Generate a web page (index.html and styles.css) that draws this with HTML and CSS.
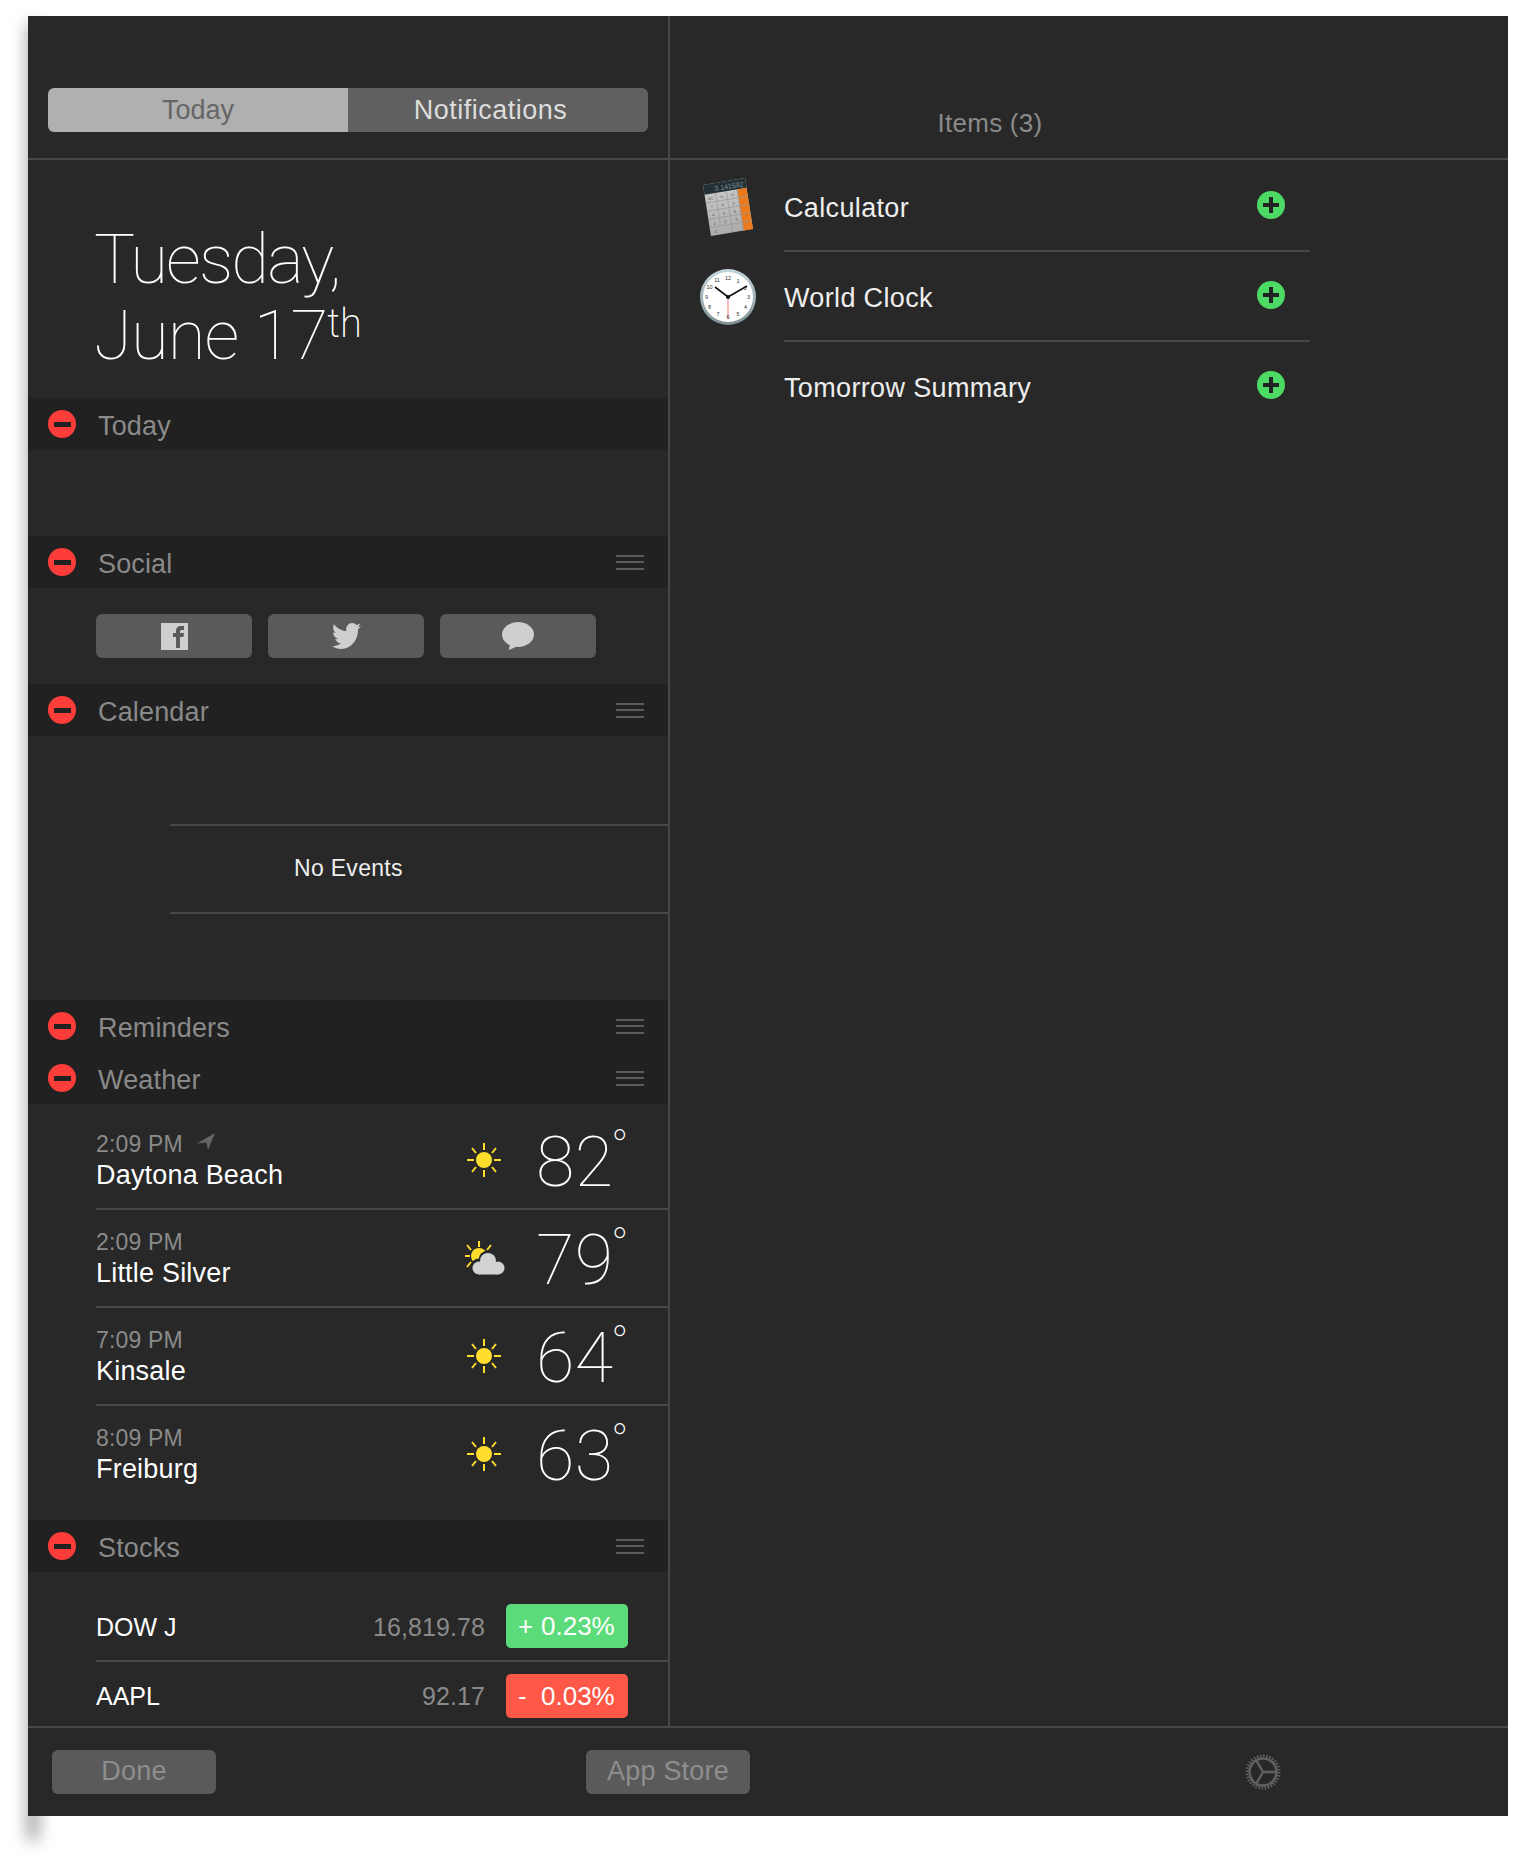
FILE: index.html
```html
<!DOCTYPE html>
<html lang="en">
	<head>
		<meta charset="UTF-8">
		<title>Notification Center - Edit</title>
		<link rel="stylesheet" href="styles.css">
	</head>
	<body>
		<svg class="defs" width="0" height="0">
			<symbol id="sun" viewBox="0 0 36 36">
				<circle cx="18" cy="18" r="8" fill="#fedd2d"/>
				<g stroke="#fedd2d" stroke-width="2">
					<path d="M18 1v7M18 28v7M1 18h7M28 18h7M6 6l4 5M30 6l-4 5M6 30l4-5M30 30l-4-5"/>
				</g>
			</symbol>
		</svg>
		<div class="window">
			<div class="top">
				<div class="topleft">
					<div class="segment">
						<div class="seg on">Today</div>
						<div class="seg off">Notifications</div>
					</div>
				</div>
				<div class="topright">Items (3)</div>
			</div>
			<div class="middle">
				<div class="left">
					<div class="date">
						<div class="tuesday">Tuesday,</div>
						<div class="june">June 17<sup>th</sup></div>
					</div>

					<div class="head"><span class="remove"></span><span class="label">Today</span></div>
					<div class="todaybody"></div>

					<div class="head"><span class="remove"></span><span class="label">Social</span><span class="handle"></span></div>
					<div class="social">
						<div class="socialbtn">
							<svg width="27" height="27" viewBox="0 0 27 27">
								<rect width="27" height="27" fill="#cfcfcf"/>
								<path d="M15 25V14h-3v-4h3V8c0-3 2-5 5-5h3v4h-2c-1.500 0-2 .5-2 2v1h4l-.5 4H19v11z" fill="#5a5a5a"/>
							</svg>
						</div>
						<div class="socialbtn">
							<svg width="29" height="26" viewBox="0 48 512 416" preserveAspectRatio="none">
								<path d="M459.37 151.716c.325 4.548.325 9.097.325 13.645 0 138.72-105.583 298.558-298.558 298.558-59.452 0-114.68-17.219-161.137-47.106 8.447.974 16.568 1.299 25.34 1.299 49.055 0 94.213-16.568 130.274-44.832-46.132-.975-84.792-31.188-98.112-72.772 6.498.974 12.995 1.624 19.818 1.624 9.421 0 18.843-1.3 27.614-3.573-48.081-9.747-84.143-51.98-84.143-102.985v-1.299c13.969 7.797 30.214 12.67 47.431 13.319-28.264-18.843-46.781-51.005-46.781-87.391 0-19.492 5.197-37.36 14.294-52.954 51.655 63.675 129.3 105.258 216.365 109.807-1.624-7.797-2.599-15.918-2.599-24.04 0-57.828 46.782-104.934 104.934-104.934 30.213 0 57.502 12.67 76.67 33.137 23.715-4.548 46.456-13.32 66.599-25.34-7.798 24.366-24.366 44.833-46.132 57.827 21.117-2.273 41.584-8.122 60.426-16.243-14.292 20.791-32.161 39.308-52.628 54.253z" fill="#cfcfcf"/>
							</svg>
						</div>
						<div class="socialbtn">
							<svg width="32" height="28" viewBox="0 0 32 28">
								<ellipse cx="16" cy="12.500" rx="16" ry="12.500" fill="#cfcfcf"/>
								<path d="M8 21l-1 7 9-4z" fill="#cfcfcf"/>
							</svg>
						</div>
					</div>

					<div class="head"><span class="remove"></span><span class="label">Calendar</span><span class="handle"></span></div>
					<div class="calendar">
						<div class="noevents">No Events</div>
					</div>

					<div class="head"><span class="remove"></span><span class="label">Reminders</span><span class="handle"></span></div>
					<div class="head"><span class="remove"></span><span class="label">Weather</span><span class="handle"></span></div>
					<div class="weather">
						<div class="city">
							<div class="where">
								<div class="time">2:09 PM
									<svg class="arrow" width="18" height="17" viewBox="0 0 18 17"><path d="M18 0L0 10.500l9.500-1L11 17z" fill="#666"/></svg>
								</div>
								<div class="name">Daytona Beach</div>
							</div>
							<svg class="sky" width="36" height="36"><use href="#sun"/></svg>
							<div class="temp">82<span class="deg">°</span></div>
						</div>
						<div class="city">
							<div class="where">
								<div class="time">2:09 PM</div>
								<div class="name">Little Silver</div>
							</div>
							<svg class="sky partly" width="44" height="36" viewBox="0 0 44 36">
								<circle cx="17" cy="16" r="8" fill="#fedd2d"/>
								<path d="M17 1v6M3 16h5M5 5l4 5M29 5l-4 5M5 27l4-5" stroke="#fedd2d" stroke-width="2"/>
								<g fill="#282828">
									<circle cx="17" cy="27" r="8.500"/>
									<circle cx="26" cy="20" r="9.500"/>
								</g>
								<g fill="#d2d2d2">
									<circle cx="17" cy="28" r="6.500"/>
									<circle cx="26" cy="21" r="8"/>
									<circle cx="36" cy="28" r="6.500"/>
									<rect x="17" y="24" width="19" height="10.500"/>
								</g>
							</svg>
							<div class="temp">79<span class="deg">°</span></div>
						</div>
						<div class="city">
							<div class="where">
								<div class="time">7:09 PM</div>
								<div class="name">Kinsale</div>
							</div>
							<svg class="sky" width="36" height="36"><use href="#sun"/></svg>
							<div class="temp">64<span class="deg">°</span></div>
						</div>
						<div class="city last">
							<div class="where">
								<div class="time">8:09 PM</div>
								<div class="name">Freiburg</div>
							</div>
							<svg class="sky" width="36" height="36"><use href="#sun"/></svg>
							<div class="temp">63<span class="deg">°</span></div>
						</div>
					</div>

					<div class="head"><span class="remove"></span><span class="label">Stocks</span><span class="handle"></span></div>
					<div class="stocks">
						<div class="stock first">
							<span class="symbol">DOW J</span>
							<span class="price">16,819.78</span>
							<span class="change up"><span class="sign">+</span>0.23%</span>
						</div>
						<div class="stock">
							<span class="symbol">AAPL</span>
							<span class="price">92.17</span>
							<span class="change down"><span class="sign">-</span>0.03%</span>
						</div>
					</div>
				</div>

				<div class="right">
					<div class="item">
						<div class="itemicon">
							<svg width="50" height="58" viewBox="0 0 50 58">
								<defs>
									<linearGradient id="keys" x1="0" y1="0" x2="0" y2="1">
										<stop offset="0" stop-color="#cdcdcd"/>
										<stop offset="1" stop-color="#ababab"/>
									</linearGradient>
								</defs>
								<g transform="matrix(.986 -.164 .154 .98 0 7)">
									<rect width="42.600" height="52" fill="url(#keys)"/>
									<rect width="42.600" height="10" fill="#233034"/>
									<rect x="33" y="10" width="9.600" height="42" fill="#ea7a1c"/>
									<text class="calcscreen" x="40" y="8">3.141592</text>
									<path d="M0 18.400h42.600M0 26.800h42.600M0 35.200h42.600M0 43.600h42.600M11 10v33.600M22 10v42M33 10v42" stroke="#969696" stroke-width=".7" fill="none"/>
									<g class="calckeys">
										<text x="5.500" y="16">AC</text><text x="16.500" y="16">%</text><text x="27.500" y="16">%</text>
										<text x="5.500" y="24.500">7</text><text x="16.500" y="24.500">8</text><text x="27.500" y="24.500">9</text>
										<text x="5.500" y="33">4</text><text x="16.500" y="33">5</text><text x="27.500" y="33">6</text>
										<text x="5.500" y="41.500">1</text><text x="16.500" y="41.500">2</text><text x="27.500" y="41.500">3</text>
										<text x="5.500" y="50">0</text>
									</g>
								</g>
							</svg>
						</div>
						<span class="itemname">Calculator</span>
						<span class="add"></span>
					</div>
					<div class="item">
						<div class="itemicon">
							<svg width="56" height="56" viewBox="0 0 56 56">
								<defs>
									<linearGradient id="rim" x1="0" y1="0" x2="0" y2="1">
										<stop offset="0" stop-color="#c4d8dc"/>
										<stop offset="1" stop-color="#7f9094"/>
									</linearGradient>
								</defs>
								<circle cx="28" cy="28" r="28" fill="url(#rim)"/>
								<circle cx="28" cy="28" r="25" fill="#fff"/>
								<path d="M28 29v21" stroke="#f6bcbc" stroke-width="2"/>
								<g class="clocknum">
									<text x="28" y="11">12</text><text x="38" y="13.500">1</text><text x="45.500" y="21">2</text><text x="48.500" y="30">3</text>
									<text x="45.500" y="40">4</text><text x="38" y="47">5</text><text x="28" y="50">6</text><text x="18" y="47">7</text>
									<text x="9.500" y="40">8</text><text x="6.500" y="30">9</text><text x="9.500" y="20">10</text><text x="17" y="13">11</text>
								</g>
								<path d="M15 18l13 10 19-11" stroke="#111" stroke-width="1.600" fill="none"/>
								<circle cx="28" cy="28" r="2" fill="#111"/>
							</svg>
						</div>
						<span class="itemname">World Clock</span>
						<span class="add"></span>
					</div>
					<div class="item">
						<div class="itemicon"></div>
						<span class="itemname">Tomorrow Summary</span>
						<span class="add"></span>
					</div>
				</div>
			</div>
			<div class="footer">
				<div class="footleft"><button class="footbtn">Done</button></div>
				<button class="footbtn">App Store</button>
				<div class="footright">
					<svg width="36" height="36" viewBox="0 0 36 36">
						<g fill="none" stroke="#5f5f5f">
							<circle cx="18" cy="18" r="16" stroke-width="3" pathLength="32" stroke-dasharray=".5 .5"/>
							<circle cx="18" cy="18" r="13.500" stroke-width="2.500"/>
							<path d="M18 18h13M18 18l-6.500-11.300M18 18l-6.500 11.300" stroke-width="2.500"/>
						</g>
					</svg>
				</div>
			</div>
		</div>
	</body>
</html>
```

FILE: styles.css
```css
html {
	background-color: #fff;
}
html, body {
	margin: 0px;
	padding: 0px;
	font-family: "Liberation Sans", Arial, sans-serif;
}
body {
	padding: 16px 0px 40px 28px;
	position: relative;
	overflow: hidden;
}
.defs {
	position: absolute;
}
.window {
	width: 1480px;
	height: 1800px;
	background-color: #282828;
	display: flex;
	flex-direction: column;
	position: relative;
}
/* soft shadow only shows down the left edge */
.window::before {
	content: "";
	position: absolute;
	left: 0px;
	top: 8px;
	width: 10px;
	height: 1816px;
	background-color: #8c8c8c;
	filter: blur(8px);
	z-index: -1;
}

.top {
	display: grid;
	grid-template-columns: 642px auto;
	height: 144px;
	box-sizing: border-box;
	border-bottom: 2px solid #484848;
}
.topleft {
	padding: 72px 20px 0px 20px;
	border-right: 2px solid #484848;
}
.segment {
	display: grid;
	grid-template-columns: 300px 300px;
	height: 44px;
	border-radius: 6px;
	overflow: hidden;
	font-size: 27px;
	line-height: 45px;
	text-align: center;
}
.seg.on {
	background-color: #b0b0b0;
	color: #666;
}
.seg.off {
	background-color: #606060;
	color: #ddd;
	padding-right: 15px;
	letter-spacing: .5px;
}
.topright {
	color: #8a8a8a;
	font-size: 26px;
	letter-spacing: .25px;
	text-align: center;
	padding: 91px 198px 0px 0px;
	line-height: 32px;
}

.middle {
	display: grid;
	grid-template-columns: 642px auto;
	height: 1566px;
	overflow: hidden;
}
.left {
	border-right: 2px solid #484848;
	overflow: hidden;
}

.date {
	box-sizing: border-box;
	height: 238px;
	padding: 62px 0px 0px 66px;
	font-family: Roboto, sans-serif;
	font-weight: 100;
	font-size: 69px;
	line-height: 76px;
	color: #fff;
}
.tuesday {
	letter-spacing: -1.9px;
}
.june {
	letter-spacing: -1px;
}
.date sup {
	font-size: 40px;
	font-weight: 200;
	line-height: 0;
	vertical-align: 22px;
	letter-spacing: 0px;
}

.head {
	display: flex;
	align-items: center;
	height: 52px;
	background-color: #212121;
	padding: 0px 24px 0px 20px;
}
.remove {
	width: 28px;
	height: 28px;
	border-radius: 50%;
	background-color: #fd3d39;
	display: flex;
	align-items: center;
	justify-content: center;
}
.remove::after {
	content: "";
	width: 17px;
	height: 5px;
	background-color: #212121;
}
.label {
	flex: 1;
	margin-left: 22px;
	padding-top: 5px;
	font-size: 27px;
	letter-spacing: .15px;
	color: #8a8a8a;
}
.handle {
	width: 28px;
	height: 15px;
	border-top: 2px solid #5c5c5c;
	border-bottom: 2px solid #5c5c5c;
	box-sizing: border-box;
	background: linear-gradient(#5c5c5c, #5c5c5c) center / 100% 2px no-repeat;
}

.todaybody {
	height: 86px;
}
.social {
	display: flex;
	gap: 16px;
	height: 96px;
	box-sizing: border-box;
	padding: 26px 0px 0px 68px;
}
.socialbtn {
	width: 156px;
	height: 44px;
	background-color: #5a5a5a;
	border-radius: 6px;
	display: flex;
	align-items: center;
	justify-content: center;
}

.calendar {
	height: 264px;
	box-sizing: border-box;
	padding: 88px 0px 0px 142px;
}
.noevents {
	height: 90px;
	box-sizing: border-box;
	border-top: 2px solid #484848;
	border-bottom: 2px solid #484848;
	color: #eee;
	font-size: 23px;
	letter-spacing: .3px;
	line-height: 85px;
	padding-left: 124px;
}

.weather {
	height: 416px;
	padding-left: 68px;
}
.city {
	display: flex;
	align-items: center;
	height: 96px;
	border-bottom: 2px solid #484848;
}
.city:first-child {
	padding-top: 8px;
}
.city.last {
	border-bottom: none;
}
.where {
	flex: 1;
}
.time {
	color: #8a8a8a;
	font-size: 23px;
	letter-spacing: .15px;
	line-height: 30px;
	height: 30px;
	display: flex;
	align-items: flex-start;
	gap: 14px;
}
.arrow {
	margin-top: 4px;
}
.name {
	color: #fff;
	font-size: 27px;
	letter-spacing: .2px;
	line-height: 32px;
}
.sky {
	margin-right: 34px;
}
.sky.partly {
	margin-right: 30px;
}
.temp {
	position: relative;
	width: 132px;
	padding-top: 3px;
	font-family: Roboto, sans-serif;
	font-weight: 100;
	font-size: 70px;
	letter-spacing: .5px;
	line-height: 70px;
	color: #fff;
}
.temp .deg {
	position: absolute;
	left: 75px;
	top: 0px;
	font-size: 46px;
	line-height: 46px;
}

.stocks {
	padding-left: 68px;
}
.stock {
	display: flex;
	align-items: center;
	height: 67px;
}
.stock.first {
	height: 90px;
	box-sizing: border-box;
	border-bottom: 2px solid #484848;
	padding-top: 20px;
}
.symbol {
	flex: 1;
	padding-top: 2px;
	color: #fff;
	font-size: 25px;
}
.price {
	padding-top: 2px;
	color: #8a8a8a;
	font-size: 25px;
	letter-spacing: .1px;
	margin-right: 21px;
}
.change {
	width: 122px;
	height: 44px;
	box-sizing: border-box;
	border-radius: 5px;
	color: #fff;
	font-size: 26px;
	line-height: 44px;
	padding-left: 12px;
	margin-right: 40px;
	display: flex;
}
.change .sign {
	width: 23px;
}
.change.up {
	background-color: #5cdb7b;
}
.change.down {
	background-color: #ff5748;
}

.right {
	padding-top: 2px;
}
.item {
	display: flex;
	align-items: center;
	height: 90px;
	position: relative;
}
.item:not(:last-child)::after {
	content: "";
	position: absolute;
	left: 114px;
	bottom: 0px;
	width: 526px;
	height: 2px;
	background-color: #484848;
}
.itemicon {
	width: 56px;
	margin-left: 30px;
	margin-right: 28px;
	display: flex;
	justify-content: center;
}
.itemname {
	width: 473px;
	color: #eee;
	font-size: 27px;
	letter-spacing: .35px;
	padding-top: 2px;
}
.add {
	width: 28px;
	height: 28px;
	border-radius: 50%;
	background-color: #4cd964;
	margin-top: -4px;
	position: relative;
}
.add::before, .add::after {
	content: "";
	position: absolute;
	background-color: #222;
}
.add::before {
	left: 6px;
	top: 12px;
	width: 16px;
	height: 4px;
}
.add::after {
	left: 12px;
	top: 6px;
	width: 4px;
	height: 16px;
}

.calcscreen {
	font-size: 7px;
	fill: #7b9094;
	text-anchor: end;
	font-family: "Liberation Sans", sans-serif;
}
.calckeys text {
	font-size: 4px;
	fill: #555;
	text-anchor: middle;
	font-family: "Liberation Sans", sans-serif;
}
.clocknum text {
	font-size: 5.500px;
	fill: #333;
	text-anchor: middle;
	font-family: "Liberation Sans", sans-serif;
}

.footer {
	flex: 1;
	display: grid;
	grid-template-columns: 558px 164px auto;
	align-items: center;
	box-sizing: border-box;
	border-top: 2px solid #484848;
}
.footleft {
	padding-left: 24px;
}
.footbtn {
	display: block;
	width: 164px;
	height: 44px;
	padding: 0px 0px 2px 0px;
	border: none;
	border-radius: 6px;
	background-color: #5a5a5a;
	color: #8e8e8e;
	font-family: "Liberation Sans", Arial, sans-serif;
	font-size: 27px;
	letter-spacing: .2px;
}
.footright {
	padding-left: 495px;
	display: flex;
}
```
